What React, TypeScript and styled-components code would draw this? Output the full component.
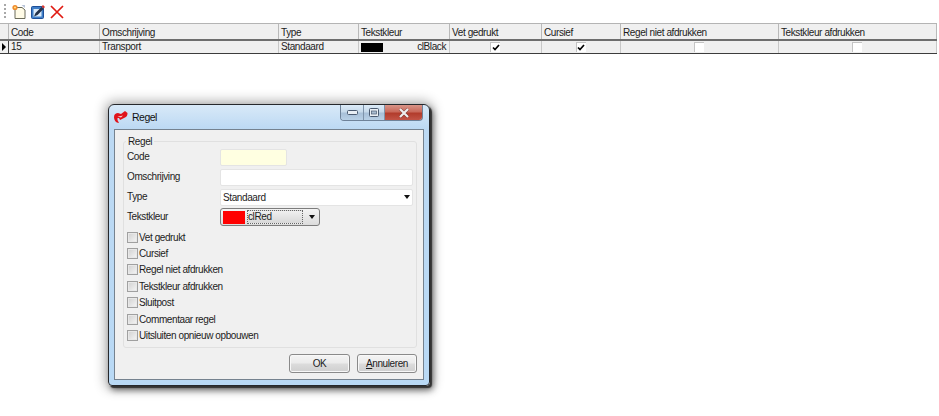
import React from 'react';
import styled, { createGlobalStyle } from 'styled-components';

const GlobalStyle = createGlobalStyle`
  html, body {
    margin: 0;
    padding: 0;
    background: #fff;
    overflow: hidden;
  }
  body {
    font-family: "Liberation Sans", Arial, sans-serif;
    font-size: 10px;
    letter-spacing: -0.4px;
    color: #1c1c1c;
  }
`;

const Page = styled.div`
  position: relative;
  width: 939px;
  height: 416px;
`;

const Toolbar = styled.div`
  display: flex;
  align-items: center;
  height: 23px;
  padding-left: 4px;
  box-sizing: border-box;
`;

const Grip = styled.div`
  width: 2px;
  height: 16px;
  margin-right: 6px;
  background: repeating-linear-gradient(to bottom, #a8a8a8 0 2px, transparent 2px 4px);
`;

const ToolIcons = styled.div`
  display: flex;
  gap: 5px;
`;

const ToolButton = styled.svg`
  display: block;
  width: 14px;
  height: 15px;
  flex: none;
`;

const columns = '9px 91px 179px 80px 91px 92px 79px 158px 158px';

const Table = styled.div`
  width: 937px;
  border-top: 1px solid #b4b4b4;
`;

const HeaderRow = styled.div`
  display: grid;
  grid-template-columns: ${columns};
  height: 15px;
  background: #f0f0f0;
  border-bottom: 2px solid #6e6e6e;
`;

const HeaderCell = styled.div`
  padding-left: 2px;
  line-height: 17px;
  border-right: 1px solid #b9b9b9;
  white-space: nowrap;
  overflow: hidden;
`;

const DataRow = styled.div`
  display: grid;
  grid-template-columns: ${columns};
  height: 12px;
  background: #f0f0f0;
  border-bottom: 1px solid #3c3c3c;
`;

const DataCell = styled.div<{ $center?: boolean }>`
  display: flex;
  align-items: center;
  justify-content: ${(p) => (p.$center ? 'center' : 'space-between')};
  padding: 0 3px 0 2px;
  line-height: 12px;
  border-right: 1px solid #c8c8c8;
  white-space: nowrap;
  overflow: hidden;
  box-sizing: border-box;
`;

const Indicator = styled.div`
  display: flex;
  align-items: center;
  padding-left: 2px;
  border-right: 1px solid #3c3c3c;
  &::before {
    content: '';
    border-left: 4px solid #000;
    border-top: 4px solid transparent;
    border-bottom: 4px solid transparent;
  }
`;

const Swatch = styled.span<{ $color: string; $height: number }>`
  display: block;
  flex: none;
  width: 22px;
  height: ${(p) => p.$height}px;
  background: ${(p) => p.$color};
`;

const CellCheck = styled.span`
  display: flex;
  align-items: center;
  justify-content: center;
  width: 10px;
  height: 10px;
  background: #fff;
  border-left: 1px solid #c4c4c4;
  border-top: 1px solid #c4c4c4;
  box-sizing: border-box;
`;

const Dialog = styled.div`
  position: absolute;
  left: 108px;
  top: 104px;
  width: 322px;
  height: 282px;
  box-sizing: border-box;
  display: flex;
  flex-direction: column;
  padding: 0 5px 5px;
  border: 1px solid #26282c;
  border-radius: 6px 6px 4px 4px;
  background: linear-gradient(to bottom, #d8e9f8 0, #bcd9f3 24px, #b9d9f5 100%);
  box-shadow: 2px 2px 1px #333, 3px 4px 6px rgba(0, 0, 0, 0.5), 0 0 12px 3px rgba(0, 0, 0, 0.3);
`;

const TitleBar = styled.div`
  display: flex;
  align-items: flex-start;
  height: 24px;
  flex: none;
`;

const TitleIcon = styled.svg`
  width: 14px;
  height: 12px;
  margin: 6px 4px 0 0;
  flex: none;
`;

const Title = styled.span`
  margin-top: 5px;
  font-size: 10.5px;
  letter-spacing: -0.5px;
  line-height: 14px;
  flex: 1;
  color: #111;
`;

const WindowButtons = styled.div`
  display: flex;
  height: 16px;
  margin-right: 1px;
  border: 1px solid #6e8299;
  border-top: none;
  border-radius: 0 0 4px 4px;
  overflow: hidden;
  box-sizing: border-box;
`;

const WindowButton = styled.div<{ $width: number; $close?: boolean }>`
  display: flex;
  align-items: center;
  justify-content: center;
  width: ${(p) => p.$width}px;
  border-left: 1px solid #7e93aa;
  box-sizing: border-box;
  background: ${(p) =>
    p.$close
      ? 'linear-gradient(to bottom, #d89488 0, #c9695a 45%, #b23c2c 55%, #c25446 100%)'
      : 'linear-gradient(to bottom, #dcebf8 0, #c6d9ea 45%, #a8c0d8 55%, #b8d0e6 100%)'};
  &:first-child {
    border-left: none;
  }
`;

const Panel = styled.div`
  flex: 1;
  display: flex;
  flex-direction: column;
  padding: 11px 6px 6px 8px;
  background: #f0f0f0;
  border: 1px solid #75828f;
  box-sizing: border-box;
`;

const GroupBox = styled.div`
  position: relative;
  height: 207px;
  flex: none;
  padding: 5px 0 0 3px;
  border: 1px solid #e0e0e0;
  border-radius: 3px;
  box-sizing: border-box;
`;

const Legend = styled.span`
  position: absolute;
  left: 2px;
  top: -6px;
  padding: 0 2px;
  line-height: 12px;
  background: #f0f0f0;
`;

const FormRow = styled.div<{ $height: number }>`
  display: grid;
  grid-template-columns: 93px 1fr;
  align-items: center;
  height: ${(p) => p.$height}px;
`;

const Label = styled.label`
  line-height: 14px;
`;

const Input = styled.div<{ $width: number; $bg?: string }>`
  display: flex;
  align-items: center;
  justify-content: space-between;
  width: ${(p) => p.$width}px;
  height: 17px;
  padding: 0 2px 0 2px;
  background: ${(p) => p.$bg || '#fff'};
  border: 1px solid #e4e4e4;
  border-radius: 2px;
  box-sizing: border-box;
`;

const Caret = styled.span`
  display: block;
  width: 0;
  height: 0;
  border-left: 3.5px solid transparent;
  border-right: 3.5px solid transparent;
  border-top: 4px solid #111;
`;

const ColorCombo = styled.div`
  display: flex;
  align-items: center;
  width: 100px;
  height: 18px;
  padding: 1px 2px;
  border: 1px solid #7c7c7c;
  border-radius: 3px;
  background: linear-gradient(to bottom, #f4f4f4, #dcdcdc);
  box-sizing: border-box;
`;

const ComboValue = styled.div`
  display: flex;
  flex: 1;
  align-items: center;
  height: 14px;
  margin: 0 4px 0 2px;
  padding-left: 0;
  border: 1px dotted #666;
  background: linear-gradient(to bottom, #f0f0f0, #d8d8d8);
  box-sizing: border-box;
  line-height: 12px;
`;

const ComboCaret = styled.div`
  display: flex;
  align-items: center;
  justify-content: center;
  width: 10px;
`;

const CheckList = styled.div`
  display: flex;
  flex-direction: column;
  margin-top: 2px;
`;

const CheckRow = styled.div`
  display: flex;
  align-items: center;
  height: 16.4px;
  gap: 1px;
`;

const CheckBox = styled.span`
  width: 11px;
  height: 11px;
  flex: none;
  border: 1px solid #a0a0a0;
  background: linear-gradient(135deg, #d0d0d0, #f6f6f6);
  box-shadow: inset 0 0 0 1px #e8e8e8;
  box-sizing: border-box;
`;

const ButtonRow = styled.div`
  display: flex;
  justify-content: flex-end;
  gap: 7px;
  margin-top: 6px;
`;

const Button = styled.div<{ $width: number }>`
  display: flex;
  align-items: center;
  justify-content: center;
  width: ${(p) => p.$width}px;
  height: 19px;
  border: 1px solid #8a8a8a;
  border-radius: 3px;
  background: linear-gradient(to bottom, #f4f4f4 0, #ebebeb 48%, #dcdcdc 52%, #cfcfcf 100%);
  box-shadow: inset 0 0 0 1px #f8f8f8;
  box-sizing: border-box;
  u {
    text-underline-offset: 1px;
  }
`;

const Tick = () => (
  <svg width="8" height="7" viewBox="0 0 8 7">
    <path d="M1 3.5 L3 5.5 L7 1" fill="none" stroke="#000" strokeWidth="1.7" />
  </svg>
);

const headers = [
  '',
  'Code',
  'Omschrijving',
  'Type',
  'Tekstkleur',
  'Vet gedrukt',
  'Cursief',
  'Regel niet afdrukken',
  'Tekstkleur afdrukken',
];

const checks = [
  'Vet gedrukt',
  'Cursief',
  'Regel niet afdrukken',
  'Tekstkleur afdrukken',
  'Sluitpost',
  'Commentaar regel',
  'Uitsluiten opnieuw opbouwen',
];

export default function App() {
  return (
    <Page>
      <GlobalStyle />
      <Toolbar>
        <Grip />
        <ToolIcons>
          <ToolButton viewBox="0 0 14 15">
            <path d="M3 3.5 H10 L13 6 V14.5 H3 Z" fill="#fffbe6" stroke="#6b6b5a" />
            <path d="M9.5 1 L13 1 L13 4 Z" fill="#b8c4d8" />
            <circle cx="3" cy="3.5" r="2.6" fill="#f08a2c" />
            <circle cx="3" cy="3.5" r="1.1" fill="#ffe080" />
          </ToolButton>
          <ToolButton viewBox="0 0 14 15">
            <rect x="0.5" y="2.5" width="12" height="12" rx="1" fill="#3f7fc8" stroke="#1e4f98" />
            <rect x="2.5" y="5" width="8" height="7.5" fill="#dcebfa" />
            <path d="M3 12.5 L4.5 9 L10.5 3 L12.5 5 L6.5 11 Z" fill="#23324a" />
            <path d="M10.5 2.5 L12 1 L14 3 L12.5 4.5 Z" fill="#d8342c" />
          </ToolButton>
          <ToolButton viewBox="0 0 14 15">
            <path d="M1 2 L13 14 M13 2 L1 14" stroke="#e01a12" strokeWidth="1.7" fill="none" />
          </ToolButton>
        </ToolIcons>
      </Toolbar>

      <Table>
        <HeaderRow>
          {headers.map((h, i) => (
            <HeaderCell key={i}>{h}</HeaderCell>
          ))}
        </HeaderRow>
        <DataRow>
          <Indicator />
          <DataCell>15</DataCell>
          <DataCell>Transport</DataCell>
          <DataCell>Standaard</DataCell>
          <DataCell>
            <Swatch $color="#000" $height={9} />
            <span>clBlack</span>
          </DataCell>
          <DataCell $center>
            <CellCheck>
              <Tick />
            </CellCheck>
          </DataCell>
          <DataCell $center>
            <CellCheck>
              <Tick />
            </CellCheck>
          </DataCell>
          <DataCell $center>
            <CellCheck />
          </DataCell>
          <DataCell $center>
            <CellCheck />
          </DataCell>
        </DataRow>
      </Table>

      <Dialog>
        <TitleBar>
          <TitleIcon viewBox="0 0 14 12">
            <path
              d="M0 6 C0 3 2 2 4 2 L7 3 L11 0 L13.5 2 C13.5 4 13 5.5 11 6.5 L6 9 L5 7 L3.5 7 L3.5 9 L5 12 C2 12 0 9 0 6 Z"
              fill="#e0141c"
            />
            <path d="M3.5 5.5 L7 5 L9 4.5 L7 6.5 Z" fill="#f8d0d0" />
          </TitleIcon>
          <Title>Regel</Title>
          <WindowButtons>
            <WindowButton $width={22}>
              <svg width="11" height="5" viewBox="0 0 11 5">
                <rect x="0.5" y="0.5" width="10" height="4" rx="1" fill="#e8eef4" stroke="#4a5a70" />
              </svg>
            </WindowButton>
            <WindowButton $width={21}>
              <svg width="10" height="9" viewBox="0 0 10 9">
                <rect x="0.5" y="0.5" width="9" height="8" rx="1" fill="#e8eef4" stroke="#4a5a70" />
                <rect x="2.5" y="3" width="5" height="3" fill="#a8bcd0" stroke="#4a5a70" strokeWidth="0.7" />
              </svg>
            </WindowButton>
            <WindowButton $width={38} $close>
              <svg width="12" height="10" viewBox="0 0 12 10">
                <path d="M2 1 L10 9 M10 1 L2 9" stroke="#4a2020" strokeWidth="3.2" opacity="0.5" />
                <path d="M2 1 L10 9 M10 1 L2 9" stroke="#eeeeee" strokeWidth="2.2" />
              </svg>
            </WindowButton>
          </WindowButtons>
        </TitleBar>
        <Panel>
          <GroupBox>
            <Legend>Regel</Legend>
            <FormRow $height={20}>
              <Label>Code</Label>
              <Input $width={67} $bg="#ffffe1" />
            </FormRow>
            <FormRow $height={20}>
              <Label>Omschrijving</Label>
              <Input $width={193} />
            </FormRow>
            <FormRow $height={20}>
              <Label>Type</Label>
              <Input $width={193}>
                Standaard
                <Caret />
              </Input>
            </FormRow>
            <FormRow $height={20}>
              <Label>Tekstkleur</Label>
              <ColorCombo>
                <Swatch $color="#ff0000" $height={13} />
                <ComboValue>clRed</ComboValue>
                <ComboCaret>
                  <Caret />
                </ComboCaret>
              </ColorCombo>
            </FormRow>
            <CheckList>
              {checks.map((c) => (
                <CheckRow key={c}>
                  <CheckBox />
                  <span>{c}</span>
                </CheckRow>
              ))}
            </CheckList>
          </GroupBox>
          <ButtonRow>
            <Button $width={61}>OK</Button>
            <Button $width={60}>
              <span>
                <u>A</u>nnuleren
              </span>
            </Button>
          </ButtonRow>
        </Panel>
      </Dialog>
    </Page>
  );
}
